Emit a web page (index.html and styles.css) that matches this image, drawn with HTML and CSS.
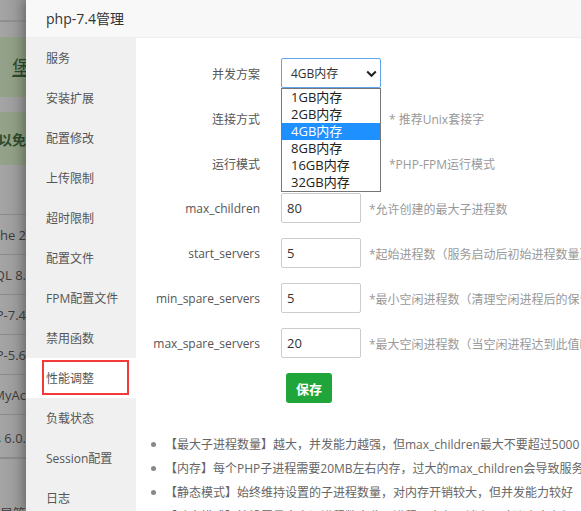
FILE: index.html
```html
<!DOCTYPE html>
<html lang="zh-CN">
<head>
<meta charset="utf-8">
<title>php-7.4管理</title>
<link rel="stylesheet" href="styles.css">
</head>
<body>
<div class="backdrop">
  <div class="bd-top"></div>
  <div class="bd-gap"></div>
  <div class="bd-green bd-g1"><span class="bd-big">堡</span></div>
  <div class="bd-gap"></div>
  <div class="bd-green bd-g2"><span class="bd-bold">可以免</span></div>
  <div class="bd-blank"></div>
  <div class="bd-row"><span>Apache 2</span></div>
  <div class="bd-row"><span>MySQL 8.</span></div>
  <div class="bd-row"><span>PHP-7.4</span></div>
  <div class="bd-row"><span>PHP-5.6</span></div>
  <div class="bd-row"><span>phpMyAc</span></div>
  <div class="bd-row bd-tall"><span>Redis 6.0.</span></div>
  <div class="bd-last"><span>全部局管</span></div>
</div>

<div class="modal">
  <div class="modal-head">php-7.4管理</div>
  <div class="modal-body">
    <ul class="side">
      <li>服务</li>
      <li>安装扩展</li>
      <li>配置修改</li>
      <li>上传限制</li>
      <li>超时限制</li>
      <li>配置文件</li>
      <li>FPM配置文件</li>
      <li>禁用函数</li>
      <li class="active"><span class="mark"></span>性能调整</li>
      <li>负载状态</li>
      <li>Session配置</li>
      <li>日志</li>
    </ul>
    <div class="content">
      <div class="row">
        <label class="lbl">并发方案</label>
        <div class="sel focus">
          <span>4GB内存</span>
          <svg class="chev" width="11" height="8" viewBox="0 0 11 8"><path d="M1.2 1.5 L5.5 5.8 L9.8 1.5" fill="none" stroke="#222" stroke-width="2"/></svg>
          <div class="dropdown">
            <div class="opt">1GB内存</div>
            <div class="opt">2GB内存</div>
            <div class="opt hl">4GB内存</div>
            <div class="opt">8GB内存</div>
            <div class="opt">16GB内存</div>
            <div class="opt">32GB内存</div>
          </div>
        </div>
      </div>
      <div class="row">
        <label class="lbl">连接方式</label>
        <div class="sel"></div>
        <span class="hint">* 推荐Unix套接字</span>
      </div>
      <div class="row">
        <label class="lbl">运行模式</label>
        <div class="sel"></div>
        <span class="hint">*PHP-FPM运行模式</span>
      </div>
      <div class="row">
        <label class="lbl">max_children</label>
        <div class="inp">80</div>
        <span class="hint">*允许创建的最大子进程数</span>
      </div>
      <div class="row">
        <label class="lbl">start_servers</label>
        <div class="inp">5</div>
        <span class="hint">*起始进程数（服务启动后初始进程数量）</span>
      </div>
      <div class="row">
        <label class="lbl">min_spare_servers</label>
        <div class="inp">5</div>
        <span class="hint">*最小空闲进程数（清理空闲进程后的保留数量）</span>
      </div>
      <div class="row">
        <label class="lbl">max_spare_servers</label>
        <div class="inp">20</div>
        <span class="hint">*最大空闲进程数（当空闲进程达到此值时清理）</span>
      </div>
      <button class="btn">保存</button>
      <ul class="tips">
        <li>【最大子进程数量】越大，并发能力越强，但max_children最大不要超过5000</li>
        <li>【内存】每个PHP子进程需要20MB左右内存，过大的max_children会导致服务器不稳定</li>
        <li>【静态模式】始终维持设置的子进程数量，对内存开销较大，但并发能力较好</li>
        <li>【动态模式】按设置最大空闲进程数来收回进程，内存开销小，建议小内存机器使用</li>
      </ul>
    </div>
  </div>
</div>
</body>
</html>
```
FILE: styles.css
```css
html, body {
  margin: 0;
  padding: 0;
}
body {
  width: 581px;
  height: 511px;
  overflow: hidden;
  display: flex;
  font-family: "Open Sans", "Noto Sans CJK SC", sans-serif;
  font-size: 12px;
  color: #555;
  background: #9f9f9f;
}

/* dimmed page behind the dialog */
.backdrop {
  width: 26px;
  flex: none;
  overflow: hidden;
  background: linear-gradient(to right, #a5a5a5, #969696);
  color: #3c3c3c;
}
.bd-top {
  height: 20px;
  border-bottom: 2px solid #8e8e8e;
}
.bd-gap { height: 15px; }
.bd-green {
  background: linear-gradient(to right, #94a38a, #8a997e);
  display: flex;
  align-items: center;
  justify-content: flex-end;
  white-space: nowrap;
  overflow: hidden;
}
.bd-g1 { height: 60px; }
.bd-g2 { height: 53px; }
.bd-big {
  font-size: 19px;
  color: #2f4a2c;
  text-decoration: underline;
  margin-right: -5px;
}
.bd-bold {
  font-size: 14px;
  font-weight: bold;
  color: #2f4a2c;
}
.bd-blank {
  height: 49px;
  border-bottom: 1px solid #8a8a8a;
}
.bd-row {
  height: 39px;
  border-bottom: 1px solid #8a8a8a;
  display: flex;
  align-items: center;
  justify-content: flex-end;
  white-space: nowrap;
  overflow: hidden;
  font-size: 13px;
}
.bd-tall {
  height: 42px;
  padding-top: 4px;
  box-sizing: content-box;
  height: 38px;
}
.bd-last {
  padding-top: 44px;
  border-top: 1px solid #8a8a8a;
  display: flex;
  justify-content: flex-end;
  white-space: nowrap;
  overflow: hidden;
  font-size: 13px;
}

/* dialog */
.modal {
  flex: 1;
  background: #fff;
  box-shadow: -3px 0 10px rgba(0, 0, 0, 0.28);
  display: flex;
  flex-direction: column;
  min-width: 0;
}
.modal-head {
  height: 37px;
  line-height: 37px;
  padding-left: 20px;
  font-size: 14px;
  color: #333;
  background: #f8f8f8;
  border-bottom: 1px solid #eee;
}
.modal-body {
  flex: 1;
  display: flex;
  min-height: 0;
}
.side {
  list-style: none;
  margin: 0;
  padding: 0;
  width: 110px;
  flex: none;
  background: #f0f0f0;
}
.side li {
  height: 40px;
  line-height: 41px;
  padding-left: 20px;
  color: #555;
  position: relative;
}
.side li.active {
  background: #fff;
}
.mark {
  position: absolute;
  left: 16px;
  top: 2px;
  width: 83px;
  height: 31px;
  border: 2px solid #f23a3a;
}

.content {
  flex: 1;
  padding-top: 20px;
  min-width: 0;
  white-space: nowrap;
}
.row {
  display: flex;
  align-items: center;
  height: 30px;
  margin-bottom: 15px;
}
.lbl {
  width: 124px;
  text-align: right;
  margin-right: 21px;
  flex: none;
  color: #555;
  padding-top: 1px;
}
.sel {
  position: relative;
  box-sizing: border-box;
  width: 100px;
  height: 30px;
  border: 1px solid #ccc;
  border-radius: 2px;
  padding-left: 9px;
  display: flex;
  align-items: center;
  color: #333;
  flex: none;
}
.sel.focus {
  border-color: #5ea5ec;
  z-index: 2;
}
.chev {
  position: absolute;
  right: 3px;
  top: 11px;
}
.dropdown {
  position: absolute;
  left: -1px;
  top: 29px;
  box-sizing: border-box;
  width: 100px;
  border: 1px solid #767676;
  background: #fff;
  color: #222;
  font-size: 13px;
}
.opt {
  height: 17px;
  line-height: 17px;
  padding-left: 9px;
}
.opt.hl {
  background: #1e90ff;
  color: #fff;
}
.inp {
  box-sizing: border-box;
  width: 80px;
  height: 30px;
  border: 1px solid #ccc;
  border-radius: 2px;
  padding-left: 5px;
  display: flex;
  align-items: center;
  color: #333;
  font-size: 13px;
  flex: none;
}
.hint {
  margin-left: 8px;
  color: #999;
  padding-top: 1px;
}
.btn {
  display: block;
  margin: 0 0 0 150px;
  width: 46px;
  height: 30px;
  border: none;
  border-radius: 3px;
  background: #20a53a;
  color: #fff;
  font-family: inherit;
  font-size: 13px;
  font-weight: bold;
  padding: 0;
}
.tips {
  list-style: none;
  margin: 29px 0 0 0;
  padding: 0 0 0 15px;
}
.tips li {
  display: flex;
  align-items: center;
  height: 24px;
  color: #666;
}
.tips li::before {
  content: "";
  width: 5px;
  height: 5px;
  border-radius: 50%;
  background: #888;
  margin-right: 9px;
  flex: none;
}
```
